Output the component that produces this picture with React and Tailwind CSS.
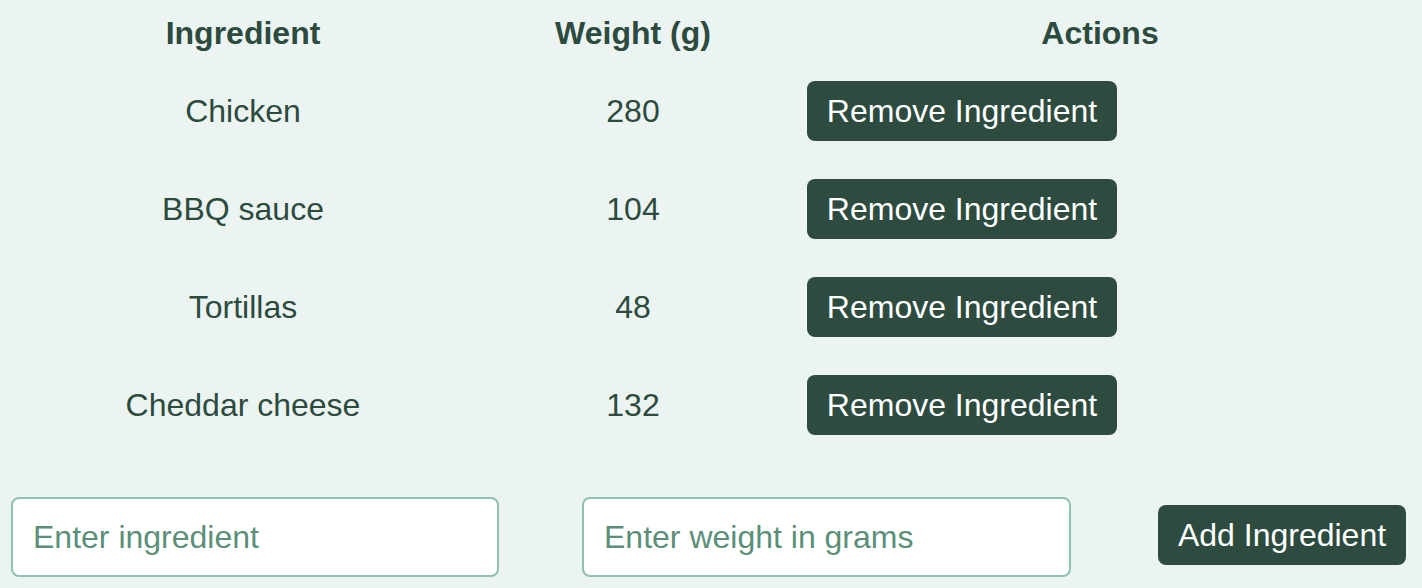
const ROWS = [
  { name: 'Chicken', weight: 280 },
  { name: 'BBQ sauce', weight: 104 },
  { name: 'Tortillas', weight: 48 },
  { name: 'Cheddar cheese', weight: 132 },
];

export default function App() {
  return (
    <div
      className="w-[1422px] h-[588px] bg-[#ebf4f1] text-[#2c4b3e] overflow-hidden"
      style={{ fontFamily: '"Liberation Sans", Arial, sans-serif' }}
    >
      {/* Table */}
      <div className="flex h-[62px] pt-[3px] items-center text-[32px] font-bold">
        <div className="w-[486px] text-center">Ingredient</div>
        <div className="w-[294px] text-center">Weight (g)</div>
        <div className="w-[640px] text-center">Actions</div>
      </div>
      {ROWS.map((r) => (
        <div key={r.name} className="flex h-[98px] items-center text-[32px]">
          <div className="w-[486px] text-center">{r.name}</div>
          <div className="w-[294px] text-center">{r.weight}</div>
          <div className="w-[640px] pl-[27px]">
            <button className="w-[310px] h-[60px] rounded-lg bg-[#2d4c3f] text-white text-[32px]">
              Remove Ingredient
            </button>
          </div>
        </div>
      ))}

      {/* Add form */}
      <div className="flex items-center mt-[43px] pl-[11px]">
        <input
          placeholder="Enter ingredient"
          className="w-[488px] h-[80px] bg-white border-2 border-[#8fc1ae] rounded-lg px-[20px] text-[32px] placeholder:text-[#5a8f78] outline-none"
        />
        <input
          placeholder="Enter weight in grams"
          className="ml-[83px] w-[489px] h-[80px] bg-white border-2 border-[#8fc1ae] rounded-lg px-[20px] text-[32px] placeholder:text-[#5a8f78] outline-none"
        />
        <button className="ml-[87px] mt-[-4px] w-[248px] h-[60px] rounded-lg bg-[#2d4c3f] text-white text-[32px]">
          Add Ingredient
        </button>
      </div>
    </div>
  );
}
